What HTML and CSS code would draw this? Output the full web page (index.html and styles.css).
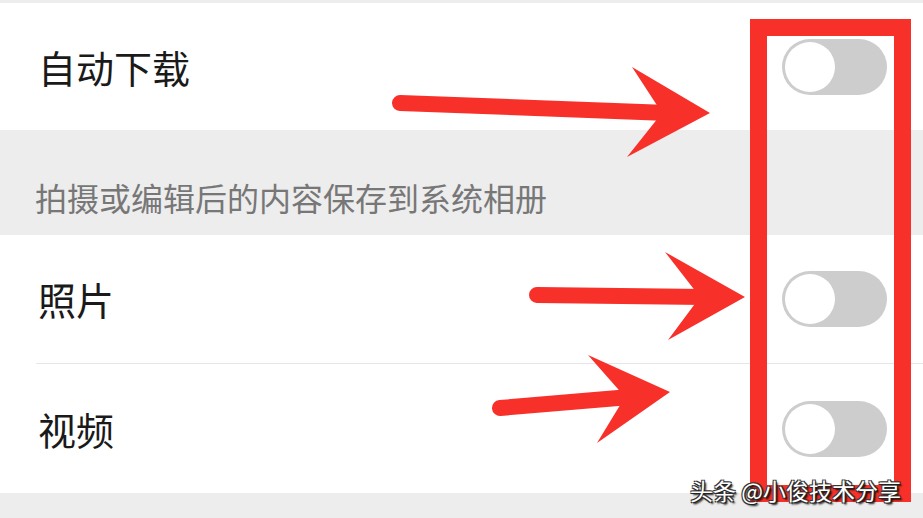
FILE: index.html
```html
<!DOCTYPE html>
<html lang="zh-CN">
<head>
  <meta charset="UTF-8">
  <title>自动下载设置</title>
  <link rel="stylesheet" href="styles.css">
</head>
<body>

  <div class="page">
    <div class="gap-top"></div>

    <div class="row row-first">
      <span class="label">自动下载</span>
      <div class="switch"><div class="knob"></div></div>
    </div>

    <div class="section-title">拍摄或编辑后的内容保存到系统相册</div>

    <div class="group">
      <div class="row row-photo">
        <span class="label">照片</span>
        <div class="switch"><div class="knob"></div></div>
      </div>
      <div class="row row-video">
        <span class="label">视频</span>
        <div class="switch"><div class="knob"></div></div>
      </div>
    </div>

    <div class="gap-bottom"></div>

    <!-- 标注：红色箭头和红框 -->
    <svg class="marks" width="923" height="518" viewBox="0 0 923 518">
      <rect x="758.5" y="27.5" width="144" height="466" fill="none" stroke="#f8302a" stroke-width="17"/>

      <line x1="400" y1="103" x2="668" y2="113" stroke="#f8302a" stroke-width="16" stroke-linecap="round"/>
      <polygon points="632,67 710,113 627,157 662,113" fill="#f8302a"/>

      <line x1="537" y1="295" x2="705" y2="297" stroke="#f8302a" stroke-width="16" stroke-linecap="round"/>
      <polygon points="665,252 745,297 668,340 700,297" fill="#f8302a"/>

      <line x1="500" y1="408" x2="630" y2="397" stroke="#f8302a" stroke-width="16" stroke-linecap="round"/>
      <polygon points="588,355 670,392 597,443 625,397" fill="#f8302a"/>
    </svg>

    <div class="watermark">头条 @小俊技术分享</div>
  </div>

</body>
</html>
```

FILE: styles.css
```css
body {
  margin: 0;
  font-family: "Noto Sans CJK SC", "Noto Sans", sans-serif;
  background-color: #ededed;
}
.page {
  position: relative;
  width: 923px;
  height: 518px;
  overflow: hidden;
}
.gap-top {
  height: 3px;
  background-color: #ededed;
}
.row {
  display: flex;
  align-items: center;
  justify-content: space-between;
  background-color: white;
  padding: 0 36px 0 38px;
}
.row-first {
  height: 127px;
}
.row-photo {
  height: 128px;
  border-bottom: 1px solid #e6e6e6;
  margin-left: 36px;
  padding-left: 2px;
}
.row-video {
  height: 129px;
}
.group {
  background-color: white;
}
.label {
  font-size: 38px;
  color: #1a1a1a;
  line-height: 1;
}
.section-title {
  height: 105px;
  box-sizing: border-box;
  padding: 48px 0 0 35px;
  font-size: 32px;
  line-height: 1.2;
  color: #777;
}
.switch {
  width: 105px;
  height: 56px;
  border-radius: 28px;
  background-color: #cdcdcd;
  padding: 3px;
  box-sizing: border-box;
}
.knob {
  width: 50px;
  height: 50px;
  border-radius: 50%;
  background-color: white;
}
.gap-bottom {
  height: 26px;
}
.marks {
  position: absolute;
  left: 0;
  top: 0;
}
.watermark {
  position: absolute;
  left: 690px;
  top: 477px;
  font-size: 23px;
  line-height: 1.2;
  color: white;
  text-shadow: 1px 1px 0 #222, -1px -1px 0 #333, 1px -1px 0 #333, -1px 1px 0 #333, 2px 2px 2px #000;
}
```
